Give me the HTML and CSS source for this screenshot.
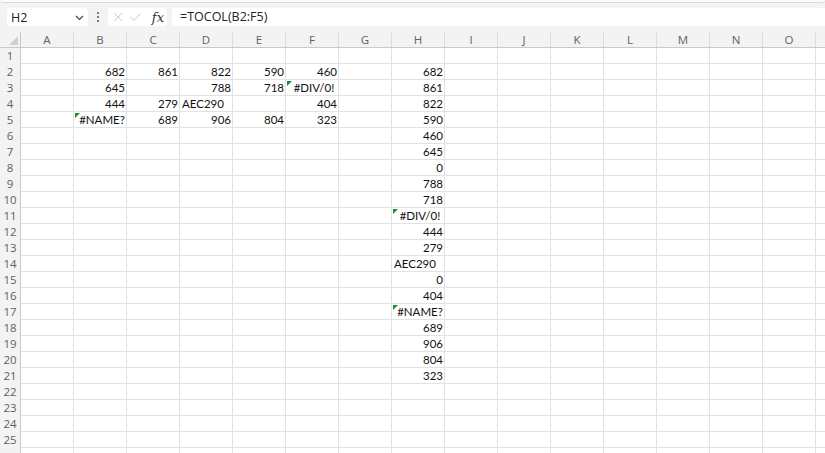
FILE: index.html
```html
<!DOCTYPE html>
<html lang="en">
<head>
<meta charset="utf-8">
<title>TOCOL</title>
<link rel="stylesheet" href="styles.css">
</head>
<body>
<div class="app">
  <div class="ribbon-edge"></div>
  <div class="fbar">
    <div class="namebox"><span class="nb-text">H2</span>
      <svg class="chev" width="9" height="6" viewBox="0 0 9 6"><path d="M1 1 L4.5 4.5 L8 1" fill="none" stroke="#444" stroke-width="1.2"/></svg>
    </div>
    <div class="kebab"><i></i><i></i><i></i></div>
    <div class="fxbox">
      <svg width="12" height="12" viewBox="0 0 12 12"><path d="M1.5 1.5 L10.5 10.5 M10.5 1.5 L1.5 10.5" stroke="#c4c4c4" stroke-width="1.1" fill="none"/></svg>
      <svg width="13" height="12" viewBox="0 0 13 12"><path d="M1 6.5 L4.5 10 L12 2" stroke="#c4c4c4" stroke-width="1.1" fill="none"/></svg>
      <span class="fx">fx</span>
    </div>
    <div class="formula">=TOCOL(B2:F5)</div>
  </div>
  <div class="sheet">
    <div class="hrow">
      <div class="corner"><span class="tri"></span></div>
      <div class="ch">A</div><div class="ch">B</div><div class="ch">C</div><div class="ch">D</div><div class="ch">E</div><div class="ch">F</div><div class="ch">G</div><div class="ch">H</div><div class="ch">I</div><div class="ch">J</div><div class="ch">K</div><div class="ch">L</div><div class="ch">M</div><div class="ch">N</div><div class="ch">O</div><div class="ch"></div>
    </div>
    <div class="row"><div class="rh">1</div></div>
    <div class="row"><div class="rh">2</div><div class="c n cb">682</div><div class="c n cc">861</div><div class="c n cd">822</div><div class="c n ce">590</div><div class="c n cf">460</div><div class="c n chh">682</div></div>
    <div class="row"><div class="rh">3</div><div class="c n cb">645</div><div class="c n cd">788</div><div class="c n ce">718</div><div class="c e cf">#DIV/0!</div><div class="c n chh">861</div></div>
    <div class="row"><div class="rh">4</div><div class="c n cb">444</div><div class="c n cc">279</div><div class="c t cd">AEC290</div><div class="c n cf">404</div><div class="c n chh">822</div></div>
    <div class="row"><div class="rh">5</div><div class="c e cb">#NAME?</div><div class="c n cc">689</div><div class="c n cd">906</div><div class="c n ce">804</div><div class="c n cf">323</div><div class="c n chh">590</div></div>
    <div class="row"><div class="rh">6</div><div class="c n chh">460</div></div>
    <div class="row"><div class="rh">7</div><div class="c n chh">645</div></div>
    <div class="row"><div class="rh">8</div><div class="c n chh">0</div></div>
    <div class="row"><div class="rh">9</div><div class="c n chh">788</div></div>
    <div class="row"><div class="rh">10</div><div class="c n chh">718</div></div>
    <div class="row"><div class="rh">11</div><div class="c e chh">#DIV/0!</div></div>
    <div class="row"><div class="rh">12</div><div class="c n chh">444</div></div>
    <div class="row"><div class="rh">13</div><div class="c n chh">279</div></div>
    <div class="row"><div class="rh">14</div><div class="c t chh">AEC290</div></div>
    <div class="row"><div class="rh">15</div><div class="c n chh">0</div></div>
    <div class="row"><div class="rh">16</div><div class="c n chh">404</div></div>
    <div class="row"><div class="rh">17</div><div class="c e chh">#NAME?</div></div>
    <div class="row"><div class="rh">18</div><div class="c n chh">689</div></div>
    <div class="row"><div class="rh">19</div><div class="c n chh">906</div></div>
    <div class="row"><div class="rh">20</div><div class="c n chh">804</div></div>
    <div class="row"><div class="rh">21</div><div class="c n chh">323</div></div>
    <div class="row"><div class="rh">22</div></div>
    <div class="row"><div class="rh">23</div></div>
    <div class="row"><div class="rh">24</div></div>
    <div class="row"><div class="rh">25</div></div>
    <div class="row"><div class="rh"></div></div>
  </div>
</div>
</body>
</html>
```

FILE: styles.css
```css
* { box-sizing: border-box; }
html, body { margin: 0; padding: 0; }
body { width: 825px; height: 453px; overflow: hidden; background: #ffffff; font-family: "Open Sans", "Noto Sans", sans-serif; }
.app { display: flex; flex-direction: column; height: 453px; background: #f3f3f3; }
.ribbon-edge { height: 3px; background: #fafafa; border-bottom: 1px solid #d9d9d9; border-radius: 0 0 6px 6px; }
.fbar { display: flex; align-items: center; height: 18px; margin-top: 5px; padding-left: 7px; }
.namebox { width: 81px; height: 18px; background: #ffffff; border-radius: 3px; display: flex; align-items: center; justify-content: space-between; padding: 0 4px; }
.nb-text { font-size: 12.5px; color: #222; }
.chev { margin-top: 1px; }
.kebab { width: 20px; height: 18px; display: flex; flex-direction: column; align-items: center; justify-content: center; gap: 2px; }
.kebab i { width: 2px; height: 2px; border-radius: 1px; background: #555; }
.fxbox { width: 59px; height: 18px; background: #ffffff; border-radius: 3px; display: flex; align-items: center; padding: 0 3px 0 5px; gap: 7px; }
.fx { font-family: "DejaVu Serif", "Liberation Serif", serif; font-style: italic; font-size: 13px; color: #333; margin-left: 3px; }
.formula { flex: 1; height: 18px; margin-left: 5px; background: #ffffff; border-radius: 3px 0 0 3px; font-size: 12.5px; color: #222; padding-left: 8px; line-height: 18px; }
.sheet { margin-top: 6px; flex: 1; background: #ffffff; overflow: hidden; }
.hrow, .row { display: grid; grid-template-columns: 21px repeat(16, 53px); height: 16px; }
.hrow { background: #f3f3f3; border-bottom: 1px solid #c9c9c9; }
.corner { position: relative; border-right: 1px solid #c9c9c9; }
.tri { position: absolute; right: 2px; bottom: 2px; width: 0; height: 0; border-left: 9px solid transparent; border-bottom: 9px solid #cfcfcf; }
.ch { border-right: 1px solid #dcdcdc; font-size: 11.5px; color: #616161; text-align: center; line-height: 15px; }
.row { border-bottom: 1px solid #e2e2e2; background-image: linear-gradient(to right, transparent 52px, #e2e2e2 52px); background-size: 53px 100%; background-position: 21px 0; background-repeat: repeat-x; }
.rh { grid-column: 1; background: #f3f3f3; border-right: 1px solid #c9c9c9; font-size: 11.5px; color: #616161; text-align: center; line-height: 15px; margin-bottom: -1px; }
.c { font-family: Lato, "Noto Sans", sans-serif; font-size: 11.5px; color: #111; line-height: 15px; padding: 0 2px; white-space: nowrap; position: relative; }
.n { text-align: right; }
.t { text-align: left; }
.e { text-align: center; padding-left: 5px; }
.e::before { content: ""; position: absolute; left: 1px; top: 1px; width: 0; height: 0; border-top: 5px solid #1e8a3c; border-right: 5px solid transparent; }
.cb { grid-column: 3; }
.cc { grid-column: 4; }
.cd { grid-column: 5; }
.ce { grid-column: 6; }
.cf { grid-column: 7; }
.chh { grid-column: 9; }
```
